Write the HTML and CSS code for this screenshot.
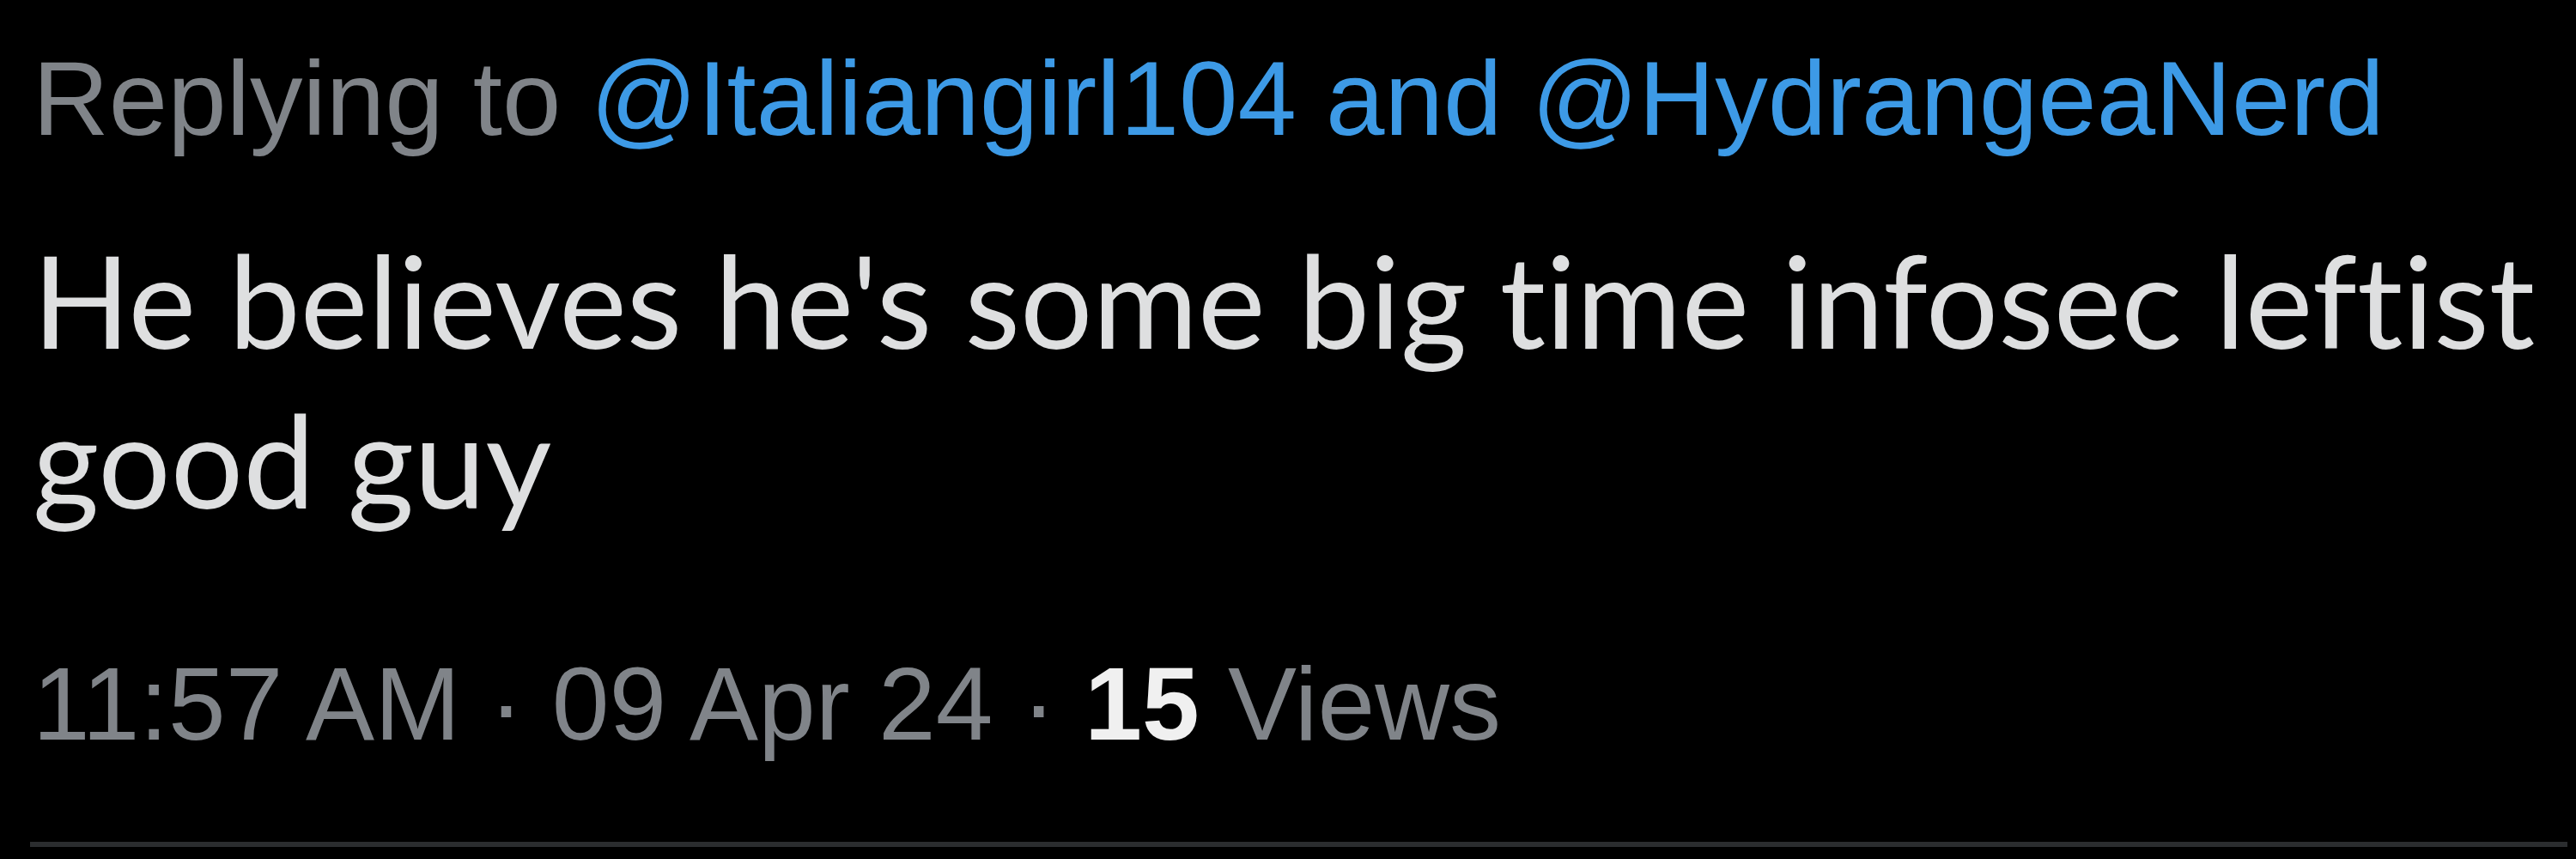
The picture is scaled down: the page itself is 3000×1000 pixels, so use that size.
FILE: index.html
```html
<!DOCTYPE html>
<html>
<head>
<meta charset="utf-8">
<link rel="stylesheet" href="styles.css">
</head>
<body>
<article class="tweet">
  <div class="reply">Replying to <a class="mention">@Italiangirl104</a> <span class="mention">and</span> <a class="mention">@HydrangeaNerd</a></div>
  <div class="body">He believes he's some big time infosec leftist good guy</div>
  <div class="meta">11:57 AM · 09 Apr 24 · <span class="count">15</span> Views</div>
  <div class="divider"></div>
</article>
</body>
</html>
```
FILE: styles.css
```css
html, body {
  margin: 0;
  padding: 0;
  background: #000;
}
.tweet {
  width: 3000px;
  height: 1000px;
  box-sizing: border-box;
  padding: 41px 10px 0 38px;
  font-family: "Liberation Sans", Arial, sans-serif;
  display: flex;
  flex-direction: column;
}
.reply {
  font-size: 123px;
  line-height: 148px;
  color: #808489;
  white-space: nowrap;
}
.mention {
  color: #3d9ae6;
  text-decoration: none;
}
.body {
  margin-top: 67px;
  font-family: Lato, "Liberation Sans", sans-serif;
  font-size: 149px;
  line-height: 186px;
  color: #dedfe0;
  width: 2940px;
  font-variant-ligatures: none;
  font-feature-settings: "liga" 0, "clig" 0;
}
.meta {
  margin-top: 118px;
  font-size: 120px;
  line-height: 146px;
  color: #808489;
  white-space: nowrap;
}
.count {
  color: #f0f0f0;
  font-weight: bold;
}
.divider {
  margin-top: 88px;
  height: 6px;
  margin-left: -3px;
  background: #2b2d2f;
}
```
